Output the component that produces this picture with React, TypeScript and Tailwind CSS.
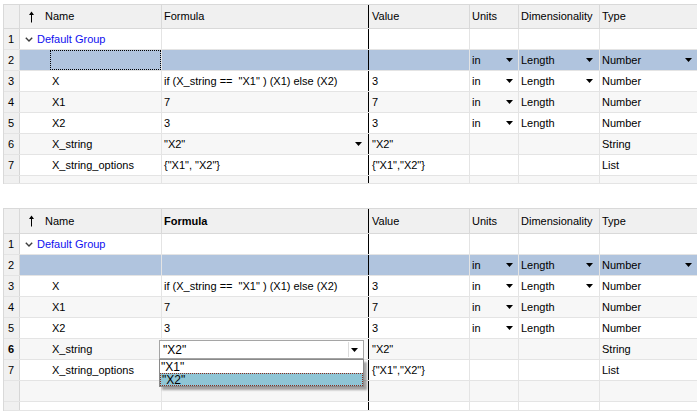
import type { ReactNode } from 'react';

const Caret = () => (
  <svg width="7" height="4" viewBox="0 0 7 4" className="shrink-0">
    <path d="M0 0H7L3.5 4Z" fill="#000" />
  </svg>
);

const SortArrow = () => (
  <svg width="7" height="12" viewBox="0 0 7 12" className="shrink-0">
    <path d="M3.5 0.5L1 4H3V11.5H4V4H6Z" fill="#000" />
  </svg>
);

const Chevron = () => (
  <svg width="8" height="5" viewBox="0 0 8 5" className="shrink-0">
    <path d="M0.8 0.8L4 4L7.2 0.8" fill="none" stroke="#3c3c3c" strokeWidth="1.4" />
  </svg>
);

const Drop = ({ label, pr }: { label: string; pr: string }) => (
  <div className={`flex w-full items-center justify-between ${pr}`}>
    <span>{label}</span>
    <Caret />
  </div>
);

// open editor of the Formula cell: combo box with its list below it
const Combo = () => (
  <>
    <div className="absolute left-[-3px] top-[1px] z-10 flex h-[19px] w-[205px] items-center justify-between border border-[#a5a5a5] bg-white pl-[3px] pr-[3px] text-[12px]">
      <span>"X2"</span>
      <span className="flex h-[15px] w-[12px] items-center justify-center border-l border-[#dcdcdc]">
        <Caret />
      </span>
    </div>
    <div className="absolute left-[-3px] top-[20px] z-20 w-[205px] border border-[#8a8a8a] bg-white text-[12px] leading-[12px] shadow-[3px_3px_2px_rgba(0,0,0,0.35)]">
      <div className="flex h-[13px] items-center overflow-hidden pl-[1px]">"X1"</div>
      <div className="flex h-[13px] items-center overflow-hidden border border-dotted border-[#8b2d1d] bg-[#8fc5d5] pl-[1px]">"X2"</div>
    </div>
  </>
);

type RowData = {
  n?: number;
  bg: string;
  h?: string;
  name?: ReactNode;
  formula?: ReactNode;
  value?: ReactNode;
  units?: ReactNode;
  dim?: ReactNode;
  type?: ReactNode;
  bold?: boolean;
};

const Row = ({ r }: { r: RowData }) => (
  <div className={`flex ${r.h ?? 'h-[21px]'} border-b border-[#e4e4e4] ${r.bg}`}>
    <div className={`flex w-[16px] shrink-0 items-center border-r border-[#d6d6d6] bg-[#f0f0f0] pl-[4px] ${r.bold ? 'font-bold' : ''}`}>
      {r.n}
    </div>
    <div className="flex w-[142px] shrink-0 items-center border-r border-[#e4e4e4]">{r.name}</div>
    <div className="relative flex w-[207px] shrink-0 items-center border-r border-black pl-[2px]">{r.formula}</div>
    <div className="flex w-[101px] shrink-0 items-center border-r border-[#e4e4e4] pl-[3px]">{r.value}</div>
    <div className="flex w-[49px] shrink-0 items-center border-r border-[#e4e4e4] pl-[2px]">{r.units}</div>
    <div className="flex w-[81px] shrink-0 items-center border-r border-[#e4e4e4] pl-[2px]">{r.dim}</div>
    <div className="flex flex-1 items-center pl-[2px]">{r.type}</div>
  </div>
);

const Header = ({ bottom }: { bottom?: boolean }) => (
  <div className={`flex ${bottom ? 'h-[26px]' : 'h-[25px]'} border-y border-[#d9d9d9] bg-[#f0f0f0]`}>
    <div className="w-[16px] shrink-0 border-r border-[#d9d9d9]" />
    <div className="flex w-[142px] shrink-0 items-center gap-[10px] border-r border-[#d9d9d9] pl-[8px]">
      <SortArrow />
      <span>Name</span>
    </div>
    <div className={`flex w-[207px] shrink-0 items-center border-r border-black pl-[2px] ${bottom ? 'font-bold' : ''}`}>
      Formula
    </div>
    <div className="flex w-[101px] shrink-0 items-center border-r border-[#d9d9d9] pl-[3px]">Value</div>
    <div className="flex w-[49px] shrink-0 items-center border-r border-[#d9d9d9] pl-[2px]">Units</div>
    <div className="flex w-[81px] shrink-0 items-center border-r border-[#d9d9d9] pl-[2px]">Dimensionality</div>
    <div className="flex flex-1 items-center pl-[2px]">Type</div>
  </div>
);

const child = (s: string) => <span className="pl-[32px]">{s}</span>;

const Table = ({ bottom }: { bottom?: boolean }) => {
  const rows: RowData[] = [
    {
      n: 1,
      bg: 'bg-white',
      name: (
        <div className="flex items-center gap-[4px] pl-[5px]">
          <Chevron />
          <span className="text-[#1010f0]">Default Group</span>
        </div>
      ),
    },
    {
      n: 2,
      bg: 'bg-[#b0c4de]',
      name: bottom ? null : <div className="ml-[30px] h-full flex-1 border border-dotted border-black" />,
      units: <Drop label="in" pr="pr-[5px]" />,
      dim: <Drop label="Length" pr="pr-[6px]" />,
      type: <Drop label="Number" pr="pr-[5px]" />,
    },
    {
      n: 3,
      bg: 'bg-white',
      name: child('X'),
      formula: 'if (X_string ==  "X1" ) (X1) else (X2)',
      value: '3',
      units: <Drop label="in" pr="pr-[5px]" />,
      dim: <Drop label="Length" pr="pr-[6px]" />,
      type: 'Number',
    },
    {
      n: 4,
      bg: 'bg-[#f7f7f7]',
      name: child('X1'),
      formula: '7',
      value: '7',
      units: <Drop label="in" pr="pr-[5px]" />,
      dim: 'Length',
      type: 'Number',
    },
    {
      n: 5,
      bg: 'bg-white',
      name: child('X2'),
      formula: '3',
      value: '3',
      units: <Drop label="in" pr="pr-[5px]" />,
      dim: 'Length',
      type: 'Number',
    },
    {
      n: 6,
      bg: 'bg-[#f7f7f7]',
      bold: bottom,
      name: child('X_string'),
      formula: bottom ? <Combo /> : <Drop label={'"X2"'} pr="pr-[6px]" />,
      value: '"X2"',
      type: 'String',
    },
    {
      n: 7,
      bg: 'bg-white',
      name: child('X_string_options'),
      // hidden under the open list in the lower grid
      formula: bottom ? null : '{"X1", "X2"}',
      value: '{"X1","X2"}',
      type: 'List',
    },
  ];
  const tail: RowData[] = bottom
    ? [{ bg: 'bg-[#f7f7f7]' }, { bg: 'bg-white', h: 'h-[9px]' }]
    : [{ bg: 'bg-[#f7f7f7]', h: 'h-[8px]' }];

  return (
    <div className="ml-[3px] border-l border-[#d9d9d9]">
      <Header bottom={bottom} />
      {[...rows, ...tail].map((r, i) => (
        <Row key={i} r={r} />
      ))}
    </div>
  );
};

export default function App() {
  return (
    <div className="h-[413px] w-[697px] overflow-hidden whitespace-pre bg-white pt-[4px] font-['Liberation_Sans',Arial,sans-serif] text-[11px] text-black">
      <Table />
      <div className="h-[24px]" />
      <Table bottom />
    </div>
  );
}
